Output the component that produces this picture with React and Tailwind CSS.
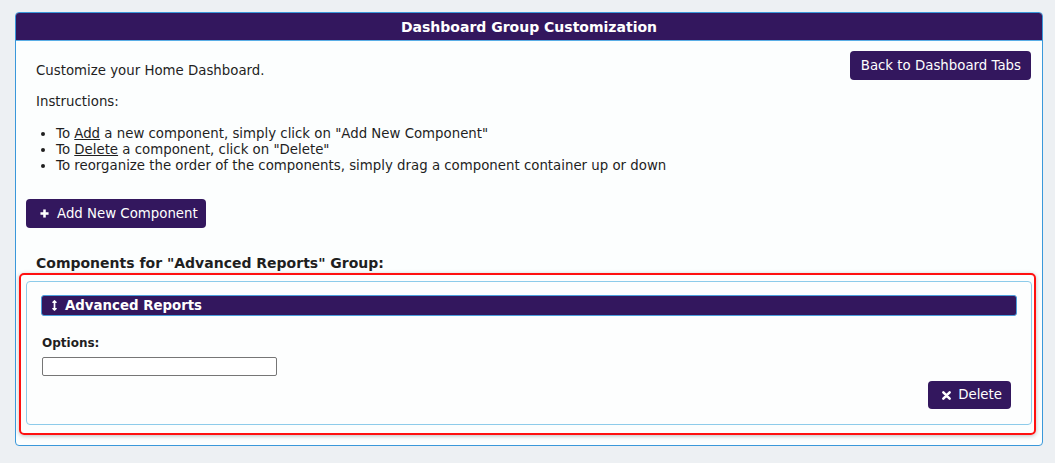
import React from "react";
import { FaArrowsAltV } from "react-icons/fa";

const font = { fontFamily: '"DejaVu Sans", Verdana, sans-serif' };

function PlusIcon() {
  return (
    <svg width="9" height="9" viewBox="0 0 10 10" fill="currentColor">
      <rect x="3.6" y="0.5" width="2.8" height="9" />
      <rect x="0.5" y="3.6" width="9" height="2.8" />
    </svg>
  );
}

function TimesIcon() {
  return (
    <svg width="9" height="9" viewBox="0 0 10 10">
      <path d="M1.5 1.5 L8.5 8.5 M8.5 1.5 L1.5 8.5" stroke="currentColor" strokeWidth="2.8" strokeLinecap="round" />
    </svg>
  );
}

export default function App() {
  return (
    <div
      className="min-h-[463px] bg-[#edf0f3] pt-[12px] pl-[15px] pr-[12px] pb-[16px] text-[#1f1f1f]"
      style={font}
    >
      <div className="border border-[#3a98da] rounded-[4px] bg-[#fcfefe] overflow-hidden">
        <div className="h-[28px] bg-[#33175e] border-b border-[#5aaee6] flex items-center justify-center">
          <span className="text-white font-bold text-[14px] leading-none">
            Dashboard Group Customization
          </span>
        </div>

        <div className="pt-[10px] pb-[10px]">
          <div className="flex justify-between items-start pl-[20px] pr-[11px]">
            <div className="pt-[12px] text-[13.33px] leading-[16px]">
              <p>Customize your Home Dashboard.</p>
              <p className="mt-[15px]">Instructions:</p>
            </div>
            <button className="h-[29px] pl-[11px] pr-[10px] bg-[#33175e] rounded-[4px] text-white text-[13.33px] leading-none">
              Back to Dashboard Tabs
            </button>
          </div>

          <ul className="mt-[16px] pl-[40px] text-[13.33px] leading-[16px] list-disc">
            <li>
              To <span className="underline">Add</span> a new component, simply click on "Add New Component"
            </li>
            <li>
              To <span className="underline">Delete</span> a component, click on "Delete"
            </li>
            <li>To reorganize the order of the components, simply drag a component container up or down</li>
          </ul>

          <div className="mt-[25px] pl-[10px]">
            <button className="h-[29px] pl-[14px] pr-[8px] bg-[#33175e] rounded-[4px] text-white text-[13.33px] leading-none flex items-center gap-[8px]">
              <PlusIcon />
              <span>Add New Component</span>
            </button>
          </div>

          <h3 className="mt-[26px] pl-[20px] font-bold text-[14px] leading-[18px]">
            Components for "Advanced Reports" Group:
          </h3>

          <div className="mt-[1px] ml-[3px] mr-[6px] border-2 border-[#ff1010] rounded-[5px] pt-[6px] pl-[5px] pr-[2px] pb-[8px] shadow-[0_1px_4px_rgba(0,0,0,0.25)]">
            <div className="border border-[#8dcbea] rounded-[4px] bg-[#fdfefe] pt-[13px] px-[14px] pb-[15px]">
              <div className="h-[21px] bg-[#33175e] border border-[#4c9fdc] rounded-[3px] flex items-center pl-[7px] text-white font-bold text-[13.33px] leading-none">
                <FaArrowsAltV className="w-[11px] h-[11px]" />
                <span className="ml-[5px]">Advanced Reports</span>
              </div>

              <div className="mt-[20px] pl-[1px] font-bold text-[12px] leading-[14px]">Options:</div>
              <input
                type="text"
                className="mt-[7px] ml-[1px] block w-[235px] h-[19px] border border-[#767676] rounded-[2px] bg-white"
              />
              <div className="flex justify-end pr-[6px] mt-[5px]">
                <button className="h-[28px] pl-[14px] pr-[9px] bg-[#33175e] rounded-[4px] text-white text-[13.33px] leading-none flex items-center gap-[7px]">
                  <TimesIcon />
                  <span>Delete</span>
                </button>
              </div>
            </div>
          </div>
        </div>
      </div>
    </div>
  );
}
